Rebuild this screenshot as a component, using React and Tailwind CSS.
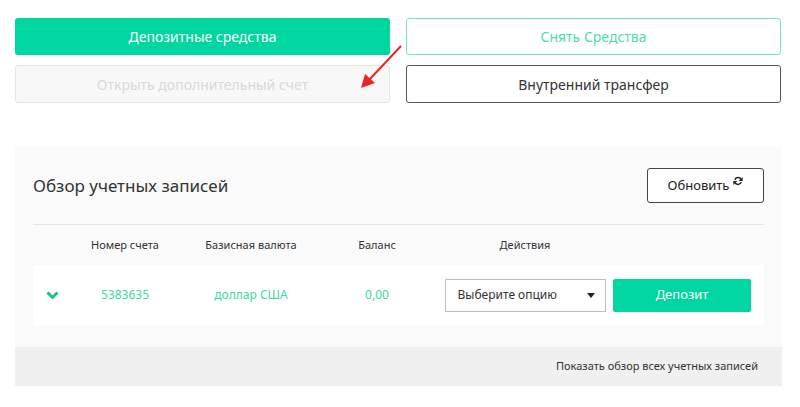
import React from "react";

const font = { fontFamily: '"Noto Sans", "Open Sans", sans-serif' };

function RefreshIcon() {
  return (
    <svg width="10" height="10" viewBox="0 0 16 16" className="ml-[4px] -mt-[9px]">
      <path d="M12.8 5.6A5.2 5.2 0 0 0 3 6.2" stroke="#222" strokeWidth="2.6" fill="none" />
      <polygon points="15.5,1.5 15.5,8 9,8" fill="#222" />
      <path d="M3.2 10.4A5.2 5.2 0 0 0 13 9.8" stroke="#222" strokeWidth="2.6" fill="none" />
      <polygon points="0.5,14.5 0.5,8 7,8" fill="#222" />
    </svg>
  );
}

const cols = "grid grid-cols-[38px_108px_144px_108px_188px_1fr] items-center";

export default function App() {
  return (
    <div className="relative w-[800px] h-[407px] bg-white text-[#333]" style={font}>
      {/* top actions */}
      <div className="grid grid-cols-2 gap-x-4 gap-y-[10px] px-[15px] pt-[18px] pr-[19px]">
        <button className="h-[37px] rounded-[3px] bg-[#00d69f] text-white text-[14px]">
          Депозитные средства
        </button>
        <button className="h-[37px] rounded-[3px] border-[1.5px] border-[#6fe6c2] text-[#4fdcaa] text-[14px]">
          Снять Средства
        </button>
        <button className="h-[38px] rounded-[3px] border border-[#e6e6e6] bg-[#f8f8f8] text-[#d9d9d9] text-[14px]">
          Открыть дополнительный счет
        </button>
        <button className="h-[38px] rounded-[3px] border-[1.5px] border-[#555] text-[#333] text-[14px]">
          Внутренний трансфер
        </button>
      </div>

      {/* red annotation arrow */}
      <svg className="absolute left-[355px] top-[42px]" width="52" height="52" viewBox="0 0 52 52">
        <line x1="46" y1="4" x2="14" y2="38" stroke="#ee2222" strokeWidth="2" />
        <polygon points="6,46 10,32 20,41" fill="#ee2222" />
      </svg>

      {/* accounts panel */}
      <div className="mx-[15px] mt-[44px] w-[767px] bg-[#fafafa]">
        <div className="px-[18px] pt-[21px]">
          <div className="flex items-center justify-between pb-[21px] border-b border-[#e4e4e4]">
            <h2 className="text-[17px] text-[#333] pt-[1px]">Обзор учетных записей</h2>
            <button className="flex items-center justify-center w-[117px] h-[35px] rounded-[3px] border border-[#444] bg-white text-[13px] text-[#222]">
              Обновить
              <RefreshIcon />
            </button>
          </div>

          <div className={`${cols} h-[40px] text-[11px] text-[#333]`}>
            <div />
            <div className="text-center">Номер счета</div>
            <div className="text-center">Базисная валюта</div>
            <div className="text-center">Баланс</div>
            <div className="text-center">Действия</div>
            <div />
          </div>

          <div className={`${cols} h-[60px] bg-white text-[12px] text-[#3dd9a0]`}>
            <div className="flex justify-center">
              <svg width="13" height="9" viewBox="0 0 13 9">
                <path d="M1.5 1.5 6.5 6.5 11.5 1.5" stroke="#14c48f" strokeWidth="3" fill="none" />
              </svg>
            </div>
            <div className="text-center">5383635</div>
            <div className="text-center">доллар США</div>
            <div className="text-center">0,00</div>
            <div className="flex justify-center">
              <div className="flex items-center justify-between w-[161px] h-[33px] border border-[#bdbdbd] bg-white pl-[12px] pr-[10px] text-[12px] text-[#333]">
                Выберите опцию
                <span className="w-0 h-0 border-l-[4px] border-r-[4px] border-t-[5px] border-l-transparent border-r-transparent border-t-[#222]" />
              </div>
            </div>
            <div className="flex justify-start -ml-[6px]">
              <button className="w-[138px] h-[33px] rounded-[2px] bg-[#00d69f] text-white text-[13px]">
                Депозит
              </button>
            </div>
          </div>
          <div className="h-[22px]" />
        </div>
        <div className="flex items-center justify-end h-[39px] bg-[#f0f0f0] pr-[24px] text-[11px] text-[#333]">
          Показать обзор всех учетных записей
        </div>
      </div>
    </div>
  );
}
